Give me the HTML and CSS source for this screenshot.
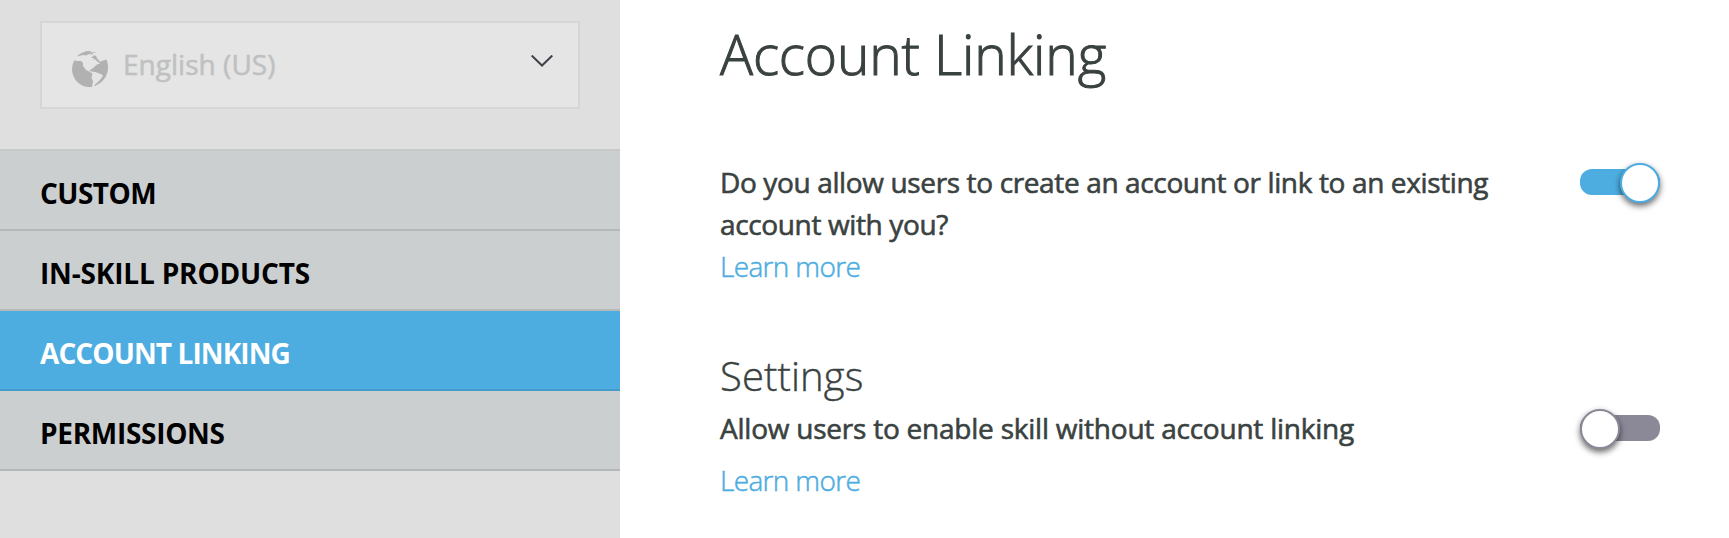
FILE: index.html
```html
<!DOCTYPE html>
<html lang="en">
<head>
<meta charset="utf-8">
<title>Account Linking</title>
<link rel="stylesheet" href="styles.css">
</head>
<body>
<aside class="sidebar">
  <div class="language">
    <svg class="globe" viewBox="0 0 36 36" aria-hidden="true">
      <path d="M2.500 9 4 10 9 10 11 12 11 15 14 19 17 20.500 20.500 22.500 19.500 27 21 30 20 36C9 37 0 29 0 18Q0 13 2.500 9Z"/>
      <path d="M5 5.500Q10 0 18 0L20 .5 17 1.500 25 1.300 21 2.300 20 3.500 17 3 14 4.500 11 4Z"/>
      <path d="M34.500 8.500Q37 14 35.500 21 33 31 22 35.300L23 33.500 27 30 31 25 30 23.500 26 22 23 21 17 20 21 17 25 13.500 28 12.500 27 11 29 10.500 31 9.500Z"/>
      <path d="M19 7 22 4.300 24 5 25.500 8 28 10.500 27 12 22.500 8 21 9 22 7Z"/>
    </svg>
    <span class="language-name">English (US)</span>
    <svg class="chevron" viewBox="0 0 22 12" aria-hidden="true"><path d="M.7.500 11 10.500 21.300.500"/></svg>
  </div>
  <nav class="menu">
    <a class="item custom">CUSTOM</a>
    <a class="item products">IN-SKILL PRODUCTS</a>
    <a class="item linking active">ACCOUNT LINKING</a>
    <a class="item permissions">PERMISSIONS</a>
  </nav>
</aside>
<main class="content">
  <h1 class="title">Account Linking</h1>
  <section class="row">
    <div class="copy">
      <p class="question">Do you allow users to create an account or link to an existing<br>account with you?</p>
      <a class="more">Learn more</a>
    </div>
    <span class="toggle on"><span class="knob"></span></span>
  </section>
  <h2 class="subtitle">Settings</h2>
  <section class="row">
    <div class="copy">
      <p class="question setting">Allow users to enable skill without account linking</p>
      <a class="more spaced">Learn more</a>
    </div>
    <span class="toggle off"><span class="knob"></span></span>
  </section>
</main>
</body>
</html>
```

FILE: styles.css
```css
* { box-sizing: border-box; }
body {
  margin: 0;
  height: 538px;
  display: flex;
  overflow: hidden;
  background: #fff;
  color: #3a4241;
  font: 28px/42px "Open Sans", "Noto Sans", sans-serif;
  white-space: nowrap;
}
.sidebar { width: 620px; flex: none; padding-top: 21px; background: #dfdfdf; }
.language {
  display: flex;
  align-items: center;
  width: 540px;
  height: 88px;
  margin: 0 40px 40px;
  padding: 0 25px 0 30px;
  border: 2px solid #d5d6d6;
  background: #e5e5e5;
}
.globe { width: 36px; height: 36px; margin-top: 8px; fill: #b1b1b1; }
.language-name { margin: 0 auto 2px 15px; color: #bfc1c1; letter-spacing: .03px; -webkit-text-stroke: .5px; }
.chevron { width: 22px; height: 12px; margin-bottom: 9px; fill: none; stroke: #414149; stroke-width: 2; }
.menu { border-top: 2px solid #c7c9c9; }
.item {
  display: block;
  height: 80px;
  padding: 21px 40px 0;
  border-bottom: 2px solid #b4b8b8;
  background: #cbcfcf;
  color: #000;
  font-weight: 700;
}
.custom { letter-spacing: -.55px; }
.products { letter-spacing: -.17px; }
.linking { letter-spacing: -.9px; }
.permissions { letter-spacing: -.3px; }
.active { background: #4dade1; border-color: #459bca; color: #fff; }
.content { flex: 1; padding: 21px 69px 0 100px; }
.title { margin: 0 0 74px; font-size: 55px; font-weight: 300; line-height: 66px; letter-spacing: -.15px; -webkit-text-stroke: 1px; }
.row { display: flex; justify-content: space-between; }
.question { margin: 0; letter-spacing: -.365px; -webkit-text-stroke: .6px; }
.setting { letter-spacing: -.23px; }
.more { display: block; color: #4dade1; font-weight: 300; letter-spacing: -.66px; -webkit-text-stroke: .5px; }
.spaced { margin-top: 10px; }
.subtitle { margin: 58px 0 1px; font-size: 40px; font-weight: 300; line-height: 61px; letter-spacing: .1px; -webkit-text-stroke: .4px; }
.toggle { display: flex; align-items: center; width: 80px; height: 26px; border-radius: 12px; margin-top: 8px; }
.knob { flex: none; width: 40px; height: 40px; margin-top: 2px; border: 2px solid; border-radius: 50%; background: #fff; box-shadow: 0 3px 6px rgba(0, 0, 0, .6); }
.on { justify-content: flex-end; background: #4dade1; color: #4dade1; }
.off { background: #8b8998; color: #8b8998; }
```
